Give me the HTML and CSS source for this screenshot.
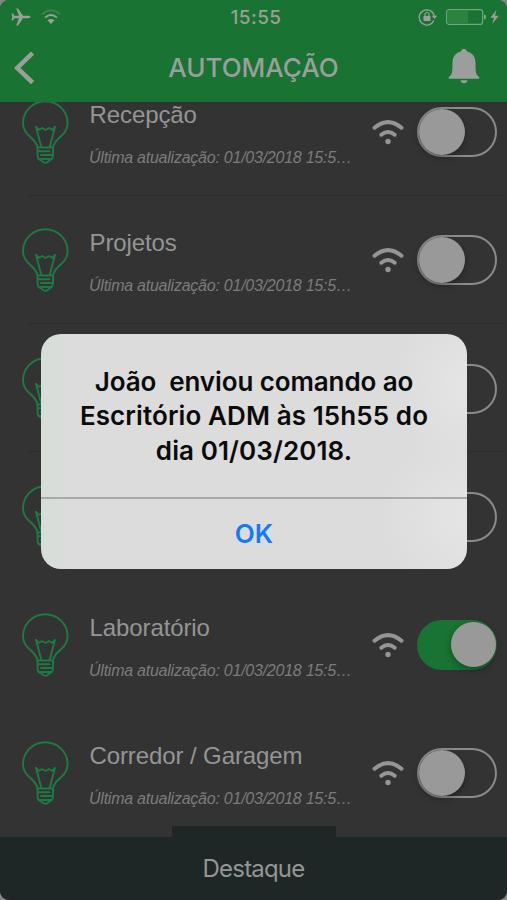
FILE: index.html
```html
<!DOCTYPE html>
<html lang="pt-BR">
<head>
<meta charset="utf-8">
<title>Automação</title>
<link rel="stylesheet" href="styles.css">
</head>
<body>
<svg width="0" height="0" class="defs" aria-hidden="true">
  <symbol id="bulb" viewBox="0 0 48 66">
    <g fill="none" stroke="currentColor" stroke-width="1.9" stroke-linejoin="round" stroke-linecap="round">
      <path d="M16.500 47.500C15.500 38 2 36 2 23.200A22.300 22 0 0 1 46.600 23.200C46.600 36 33 38 32 47.500"/>
      <path d="M20.300 47L15 26.800L18 29.800L21 28L24.500 30L28 28L31 29.800L34 26.800L28.700 47"/>
      <path d="M16.500 47.500H32V55C32 58 30.300 60 28.200 60.500C26.500 63.600 22.300 63.600 20.500 60.500C18.300 60 16.500 58 16.500 55Z"/>
      <path d="M17 51.300H28.500M20 55H31.500M18 59H30"/>
    </g>
  </symbol>
  <symbol id="wifi" viewBox="0 0 32 26">
    <g fill="none" stroke="currentColor" stroke-width="4" stroke-linecap="round">
      <path d="M2.500 8.800Q16 -2.600 29.500 8.800"/>
      <path d="M9.300 15.700Q16 10.200 22.700 15.700"/>
    </g>
    <circle cx="16" cy="22.500" r="2.700" fill="currentColor"/>
  </symbol>
</svg>
<div class="phone">
  <header class="header">
    <div class="status">
      <div class="status-left">
        <svg width="20" height="18" viewBox="0 0 20 18"><path fill="currentColor" d="M19.500 9c0 .7-1 1.200-2.300 1.200H12L7 17.500H5.200L8 10.200H3.500L1.700 12.500H.5L1.300 9 .5 5.500h1.200l1.800 2.300H8L5.200.5H7l5 7.300h5.200c1.300 0 2.300.5 2.300 1.200z"/></svg>
        <svg width="20" height="16" viewBox="0 0 20 16"><g fill="none" stroke="currentColor" stroke-width="1.800"><path opacity=".3" d="M1 5.200Q10-2.500 19 5.200"/><path d="M4 8.600Q10 3.500 16 8.600"/></g><path fill="currentColor" d="M6.500 11.300Q10 8.500 13.500 11.300L10 15z"/></svg>
      </div>
      <div class="clock">15:55</div>
      <div class="status-right">
        <svg width="20" height="18" viewBox="0 0 20 18"><path d="M15.800 12.500A7.600 7.600 0 1 1 16.300 8" fill="none" stroke="currentColor" stroke-width="1.300"/><path d="M13.800 7.700h5.400l-2.700 3.300z" fill="currentColor"/><rect x="5.500" y="8" width="7" height="5" rx=".6" fill="currentColor"/><path d="M7 8V6.500a2 2 0 0 1 4 0V8" fill="none" stroke="currentColor" stroke-width="1.200"/></svg>
        <svg width="40" height="16" viewBox="0 0 40 16"><rect x=".6" y=".6" width="36" height="14.800" rx="2.500" fill="none" stroke="#74a47b" stroke-width="1.200"/><rect x="2" y="2" width="20" height="12" rx="1" fill="#2c833b"/><path d="M38 5.300q2 .7 2 2.700t-2 2.700z" fill="#84a988"/></svg>
        <svg width="9" height="14" viewBox="0 0 9 14"><path fill="currentColor" d="M6.500 0L.3 7.800h3.600L2.300 14 8.700 5.700H5z"/></svg>
      </div>
    </div>
    <div class="navbar">
      <svg class="back" width="22" height="34" viewBox="0 0 22 34"><path d="M20.500 2L5.200 17L20.500 31.500" fill="none" stroke="currentColor" stroke-width="4.500"/></svg>
      <h1>AUTOMAÇÃO</h1>
      <svg class="bell" width="32" height="36" viewBox="0 0 32 36"><path fill="currentColor" d="M16 .8c1.600 0 2.600 1 2.800 2.500C24.200 4.700 27.500 9 27.500 14.500c0 9.500.3 12.800 3.700 14.500v1.800H.8V29C4.200 27.300 4.500 24 4.500 14.500 4.500 9 7.800 4.700 13.200 3.300 13.400 1.800 14.400.8 16 .8zM12.500 32.300h7c-.2 1.800-1.600 3-3.500 3s-3.300-1.200-3.500-3z"/></svg>
    </div>
  </header>
  <main class="list">
    <div class="row">
      <svg class="bulb"><use href="#bulb"/></svg>
      <div class="info"><div class="name">Recepção</div><div class="updated">Última atualização: 01/03/2018 15:5…</div></div>
      <svg class="wifi"><use href="#wifi"/></svg>
      <div class="switch"><span class="knob"></span></div>
    </div>
    <div class="row">
      <svg class="bulb"><use href="#bulb"/></svg>
      <div class="info"><div class="name">Projetos</div><div class="updated">Última atualização: 01/03/2018 15:5…</div></div>
      <svg class="wifi"><use href="#wifi"/></svg>
      <div class="switch"><span class="knob"></span></div>
    </div>
    <div class="row">
      <svg class="bulb"><use href="#bulb"/></svg>
      <div class="info"></div>
      <div class="switch"></div>
    </div>
    <div class="row">
      <svg class="bulb"><use href="#bulb"/></svg>
      <div class="info"></div>
      <div class="switch"></div>
    </div>
    <div class="row">
      <svg class="bulb"><use href="#bulb"/></svg>
      <div class="info"><div class="name">Laboratório</div><div class="updated">Última atualização: 01/03/2018 15:5…</div></div>
      <svg class="wifi"><use href="#wifi"/></svg>
      <div class="switch on"><span class="knob"></span></div>
    </div>
    <div class="row">
      <svg class="bulb"><use href="#bulb"/></svg>
      <div class="info"><div class="name">Corredor / Garagem</div><div class="updated">Última atualização: 01/03/2018 15:5…</div></div>
      <svg class="wifi"><use href="#wifi"/></svg>
      <div class="switch"><span class="knob"></span></div>
    </div>
  </main>
  <footer class="tabbar"><span class="tab">Destaque</span></footer>
  <div class="alert">
    <div class="message"><div class="first">João  enviou comando ao</div><div>Escritório ADM às 15h55 do</div><div>dia 01/03/2018.</div></div>
    <div class="ok">OK</div>
  </div>
</div>
</body>
</html>
```
FILE: styles.css
```css
* { box-sizing: border-box; }
body { margin: 0; background: #858585; }
.defs { position: absolute; }
.phone {
  position: relative;
  width: 507px;
  height: 900px;
  display: flex;
  flex-direction: column;
  overflow: hidden;
  border-radius: 9px;
  background: #333;
  color: #959595;
  font-family: "Liberation Sans", Arial, sans-serif;
}
svg { display: block; flex: none; }
.header {
  height: 102px;
  flex: none;
  background: #197333;
  color: #9b9f9b;
  font-family: Inter, sans-serif;
  position: relative;
  z-index: 1;
}
.status {
  height: 34px;
  display: grid;
  grid-template-columns: 1fr auto 1fr;
  align-items: center;
  padding: 0 8px 0 11px;
}
.status-left { display: flex; align-items: center; gap: 10px; }
.status-right { display: flex; align-items: center; justify-content: flex-end; gap: 4px; }
.status-right svg:first-child { margin-right: 4px; }
.clock { font-size: 19px; font-weight: 500; letter-spacing: .4px; padding-left: 2px; }
.navbar {
  height: 68px;
  display: grid;
  grid-template-columns: 1fr auto 1fr;
  align-items: center;
  padding: 0 27px 0 12px;
}
.navbar h1 { margin: 0 -7px 0 8px; font-size: 26px; font-weight: 500; line-height: 32px; }
.bell { justify-self: end; margin-top: -4px; }
.list { flex: none; height: 768.500px; margin-top: -34.500px; }
.row {
  height: 128.250px;
  display: flex;
  align-items: flex-start;
  padding: 33px 10px 0 21px;
  background: linear-gradient(#2c2c2c, #2c2c2c) 28px 100% / 100% 1px no-repeat;
}
.row:nth-child(n+4) { background: none; }
.bulb { width: 48px; height: 66px; margin-top: -.500px; color: #1b7c42; }
.info { width: 283px; margin-left: 20px; white-space: nowrap; }
.name { margin-top: -.500px; margin-left: .500px; font-size: 24px; line-height: 30px; letter-spacing: -.1px; }
.updated { margin-top: 16.500px; font-size: 16px; line-height: 22px; font-style: italic; letter-spacing: -.24px; color: #7c7c7c; }
.wifi { width: 32px; height: 26px; margin-top: 18px; }
.switch {
  width: 80px;
  height: 50px;
  margin: 6.500px 0 0 auto;
  border: 2px solid #8b8b8b;
  border-radius: 25px;
}
.knob { display: block; width: 46px; height: 46px; border-radius: 50%; background: #999; box-shadow: 0 3px 7px rgba(0,0,0,.3); }
.on { border-color: #197333; background: #197333; }
.on .knob { margin-left: 32px; width: 44.500px; height: 44.500px; }
.tabbar {
  flex: none;
  margin-top: -10px;
  height: 74px;
  background: linear-gradient(#1f2726, #1f2726) 172px 0 / 164px 11px no-repeat, linear-gradient(#1f2726, #1f2726) 0 11px / 100% 63px no-repeat;
  text-align: center;
  padding-top: 27px;
  font: 400 24px/32px Inter, sans-serif;
  letter-spacing: -.8px;
  position: relative;
}
.alert {
  position: absolute;
  left: 41px;
  top: 333.500px;
  width: 426px;
  height: 235px;
  border-radius: 20px;
  overflow: hidden;
  background:
    radial-gradient(ellipse 75px 85px at 100% 22%, #e5e5e5, rgba(229,229,229,0)),
    radial-gradient(ellipse 90px 85px at 100% 78%, #e5e5e5, rgba(229,229,229,0)),
    linear-gradient(90deg, #d6ddd7, #dcdcdc 35px);
  font-family: Inter, sans-serif;
  text-align: center;
}
.message {
  height: 165.500px;
  padding-top: 31px;
  border-bottom: 2px solid #a9a9a9;
  font-size: 26px;
  line-height: 34.700px;
  letter-spacing: .1px;
  font-weight: 600;
  color: #0b0b0b;
  white-space: pre;
}
.first { letter-spacing: -.1px; }
.ok { line-height: 70px; font-size: 26px; font-weight: 600; color: #127bf8; }
```
